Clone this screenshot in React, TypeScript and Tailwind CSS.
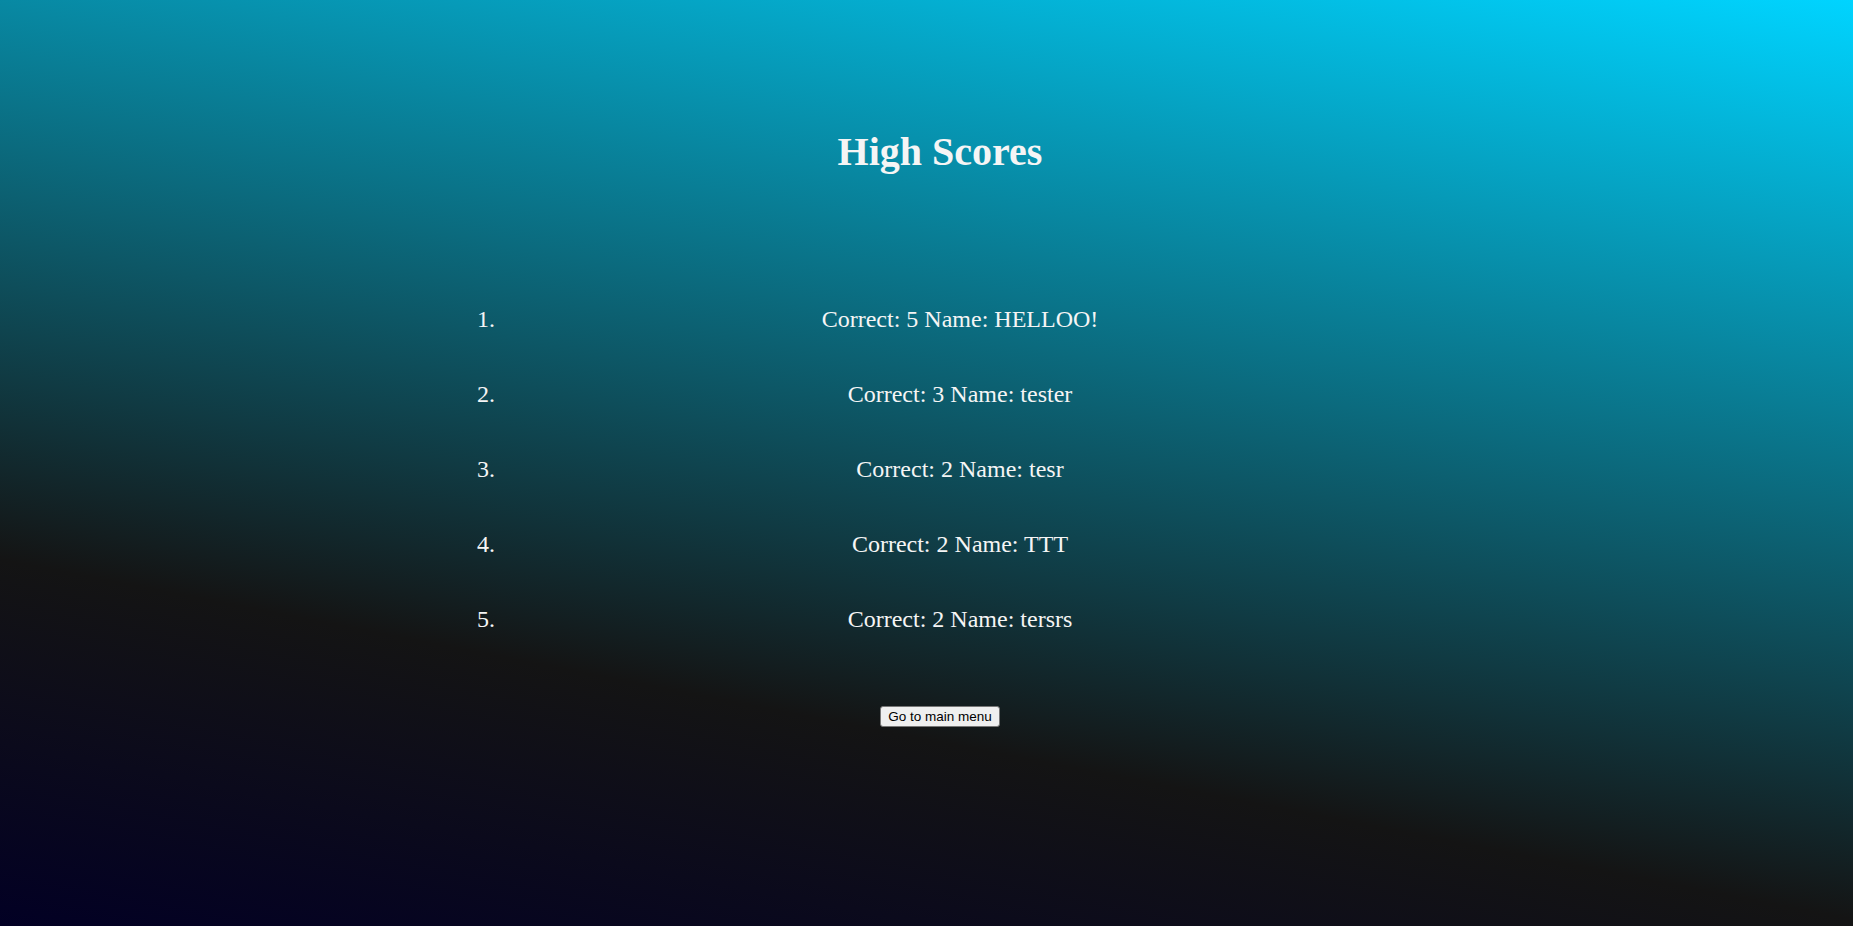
import React from 'react';

// Saved scores, best first
const scores = [
  { correct: 5, name: 'HELLOO!' },
  { correct: 3, name: 'tester' },
  { correct: 2, name: 'tesr' },
  { correct: 2, name: 'TTT' },
  { correct: 2, name: 'tersrs' },
];

const App = () => {
  return (
    <div className="min-h-[926px] w-full bg-[linear-gradient(11deg,#020024_0%,#141414_28.5%,#00d4ff_100%)] font-['Liberation_Serif','Times_New_Roman',serif] text-[#f5f5f5]">
      <div className="flex flex-col items-center pl-[27px] pt-[129px]">
        <h1 className="text-[40px] leading-[46px] font-bold">High Scores</h1>

        <ol className="mt-[106.7px] w-[958px] list-decimal pl-[40px]">
          {scores.map((s, i) => (
            <li key={i} className="py-[24.2px] text-center text-[24px] leading-[26.7px]">
              Correct: {s.correct} Name: {s.name}
            </li>
          ))}
        </ol>

        <button
          type="button"
          className="mt-[49px] rounded-[3px] border border-[#767676] bg-[#efefef] px-[7px] py-[1px] font-['Liberation_Sans',Arial,sans-serif] text-[13.5px] leading-[17px] text-black"
        >
          Go to main menu
        </button>
      </div>
    </div>
  );
};

export default App;
